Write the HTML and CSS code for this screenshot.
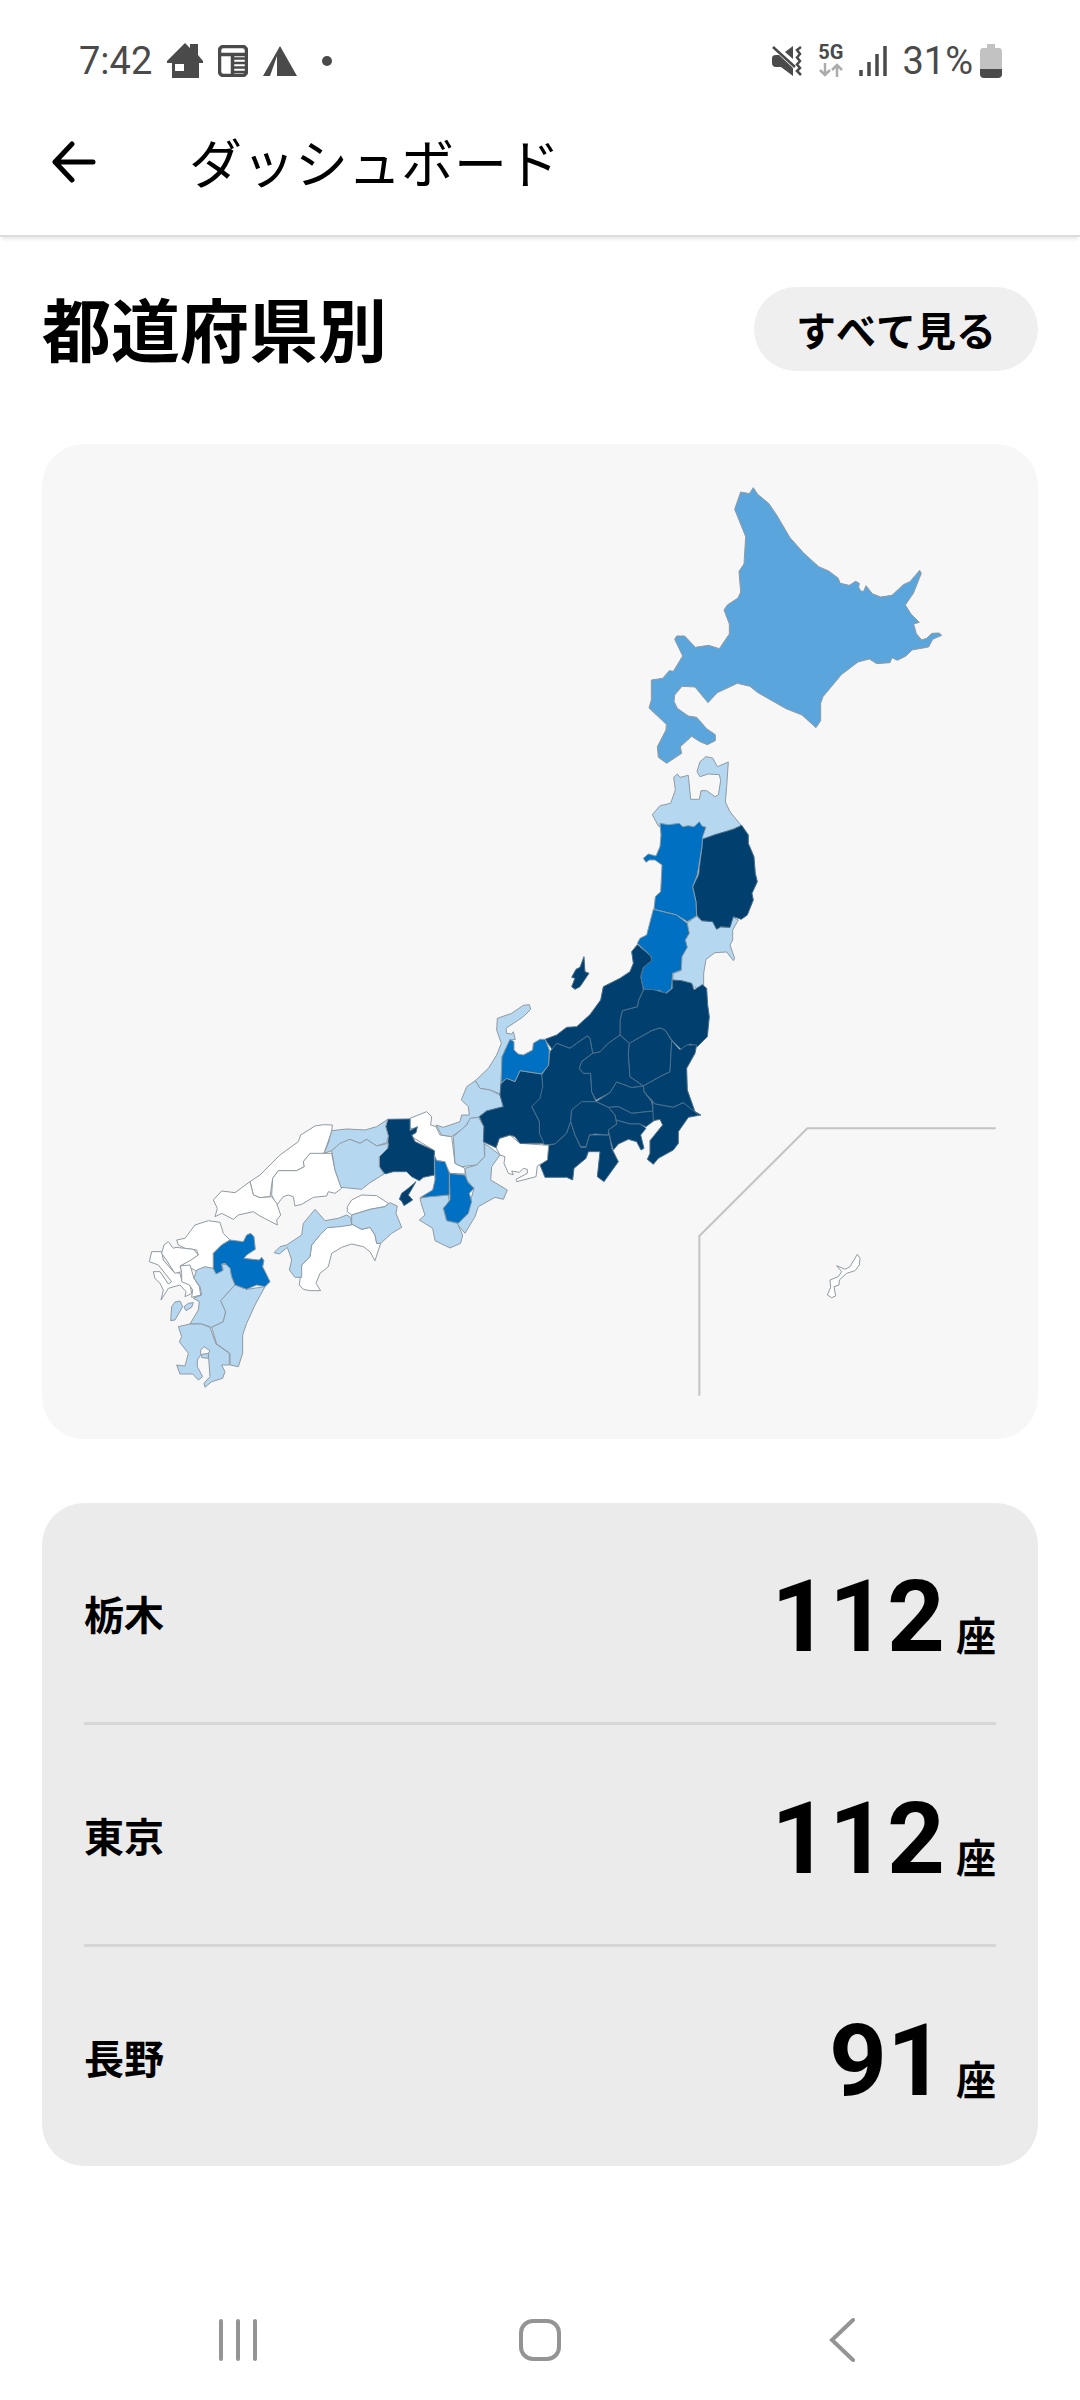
FILE: index.html
```html
<!DOCTYPE html>
<html lang="ja">
<head>
<meta charset="utf-8">
<meta name="viewport" content="width=device-width, initial-scale=1">
<title>ダッシュボード</title>
<link rel="stylesheet" href="styles.css">
</head>
<body>
<div class="screen">
  <div class="status">
    <div class="status-side">
      <span class="clock">7:42</span>
      <svg class="status-icon" width="36" height="36" viewBox="0 0 36 36"><path fill="#4a4a4a" fill-rule="evenodd" d="M18 0L23 5V1H31V12L36 18V20H32V35H5V20H0V18ZM8 21V28H17V21Z"/></svg>
      <svg class="status-icon" width="30" height="32" viewBox="0 0 30 32"><rect x="1.5" y="1.5" width="27" height="29" rx="4" fill="none" stroke="#4a4a4a" stroke-width="3.500"/><path d="M3 9.500H27M14.500 10V30" stroke="#4a4a4a" stroke-width="3.500"/><path d="M16 13.500H28M16 18H28M16 22.500H28M16 27H28" stroke="#4a4a4a" stroke-width="2.500"/></svg>
      <svg class="status-icon" width="34" height="30" viewBox="0 0 34 30"><path fill="#4a4a4a" d="M17 0L34 30H14V10L7 30H0Z"/></svg>
      <span class="more-dot"></span>
    </div>
    <div class="status-side status-right">
      <svg width="30" height="32" viewBox="0 0 30 32"><path fill="#4a4a4a" d="M0 13Q0 10 4 10H7L21 23V31L9 22H4Q0 22 0 18ZM13 7L21 1V14Z"/><path fill="none" stroke="#4a4a4a" stroke-width="2.500" d="M1 2L23 22M29 2L25 5L28 9L25 12.500L28 16L25 19.500L28 23L25 26L29 30"/></svg>
      <span class="network"><b>5G</b>
        <svg width="24" height="14" viewBox="0 0 24 14"><path fill="none" stroke="#ababab" stroke-width="2.500" d="M6 0V12M1 7L6 12L11 7M18 14V2M13 7L18 2L23 7"/></svg>
      </span>
      <svg class="signal" width="28" height="30" viewBox="0 0 28 30"><path stroke="#4a4a4a" stroke-width="3.500" d="M2 24V30M10 16V30M18 8V30M26 0V30"/></svg>
      <span class="percent">31%</span>
      <svg class="battery" width="22" height="34" viewBox="0 0 22 34"><path fill="#c2c2c2" d="M7 0H15V4H19Q22 4 22 8V25H0V8Q0 4 3 4H7Z"/><path fill="#4a4a4a" d="M0 25H22V30Q22 34 18 34H4Q0 34 0 30Z"/></svg>
    </div>
  </div>

  <header class="appbar">
    <button class="back" type="button" aria-label="戻る"><svg width="44" height="42" viewBox="0 0 44 42"><path fill="none" stroke="#000" stroke-width="5" stroke-linecap="round" stroke-linejoin="round" d="M20 3L3 21L20 39M3 21H41"/></svg></button>
    <h1 class="appbar-title">ダッシュボード</h1>
  </header>

  <main class="content">
    <div class="section-head">
      <h2 class="section-title">都道府県別</h2>
      <button class="pill" type="button">すべて見る</button>
    </div>

    <div class="map-card">
      <svg class="map" viewBox="42 444 996 995" role="img" aria-label="日本地図">
        <g class="region" transform="translate(620 470) scale(.33333)">
          <path class="l2" d="M400 53L413 73L446 100L470 135L510 203L550 248L596 290L626 303L654 324L661 340L688 346L707 334L718 340L716 352L722 363L731 364L738 347L757 371L782 381L816 376L850 344L870 335L899 301L904 310L880 370L856 405L873 432L898 457L881 462L889 491L905 510L920 505L936 490L958 489L965 496L938 508L926 531L876 540L858 558L832 571L816 563L810 578L770 581L748 567L714 576L664 614L609 680L602 700L602 752L588 773L546 735L498 716L412 667L390 649L352 640L292 668L264 698L225 651L186 649L164 675L162 694L172 715L205 738L230 742L260 776L286 794L286 812L262 824L240 815L215 799L181 830L185 850L140 880L115 862L112 830L138 780L139 763L87 714L94 690V630L128 625L148 602L160 604L188 558L164 508L170 498H194L226 532L266 526L298 536L328 492V462L312 420L322 405L354 384L362 366L357 304L372 282L377 200L344 118L362 66L388 71Z"/>
        </g>
        <g class="region" transform="translate(600 740) scale(.33333)">
          <path class="l1" d="M318 50L338 54L352 80L385 66L380 140L376 186L390 215L425 258L308 300L285 270L182 262L175 258L157 224L180 197L212 190L226 150L221 112L232 102L240 112L265 106L272 178H298L303 152H320L345 170L355 165L362 122L358 104L325 102L300 110L291 95L300 65Z"/>
          <path class="l1" d="M290 528L305 542L338 545L350 566L362 562L388 562L396 530L415 540L398 570L398 600L390 615L404 655L400 662L380 636L345 638L318 658L311 700V738L290 745L275 735L218 720L220 700L243 692L245 650L260 620L256 600L267 580L258 552Z"/>
          <path class="l4" d="M425 256L445 285L445 310L462 350L466 400L472 425L456 460L460 480L442 525L424 538L400 530L390 562L362 560L350 568L338 545L305 542L290 525L288 485L278 440L296 405L306 320V298L345 284L400 268Z"/>
          <path class="l3" d="M180 250L205 254L238 250L248 260L265 257L282 260L298 245L306 258L318 262L308 290L306 320L292 405L278 440L288 485L290 528L262 545L230 525L162 508L166 470L182 455L186 375L165 360L148 360L138 367L130 355L145 342L168 348L180 320L183 285Z"/>
          <path class="l3" d="M160 508L230 525L262 550L268 580L256 600L262 622L246 650L244 690L218 700L215 745L195 762L180 752L130 748L122 710L130 680L155 662L152 648L112 610L120 595L140 585Z"/>
        </g>
        <g class="region" transform="translate(540 920) scale(.33333)">
          <path class="l4" d="M398 180L425 182L455 190L462 210L487 194L500 205L503 255L508 290L502 350L472 380L450 372L425 390L395 360L375 330L360 324L335 332L268 370L240 345V302L247 272L292 260L296 240L312 208L340 209L380 220L398 205Z"/>
          <path class="l4" d="M292 74L332 108L335 122L310 142L302 170L310 210L296 240L292 260L247 272L240 302V345L205 370L180 396L158 400L150 355L142 348L110 370L90 385L50 370L38 390L15 358L50 345L80 322L110 320L150 284L182 240L190 200L240 175L270 155L280 130L275 95Z"/>
          <path class="l4" d="M132 110L135 155L147 160L120 200L105 208L95 200L105 175L95 172L108 148L120 142Z"/>
          <path class="l4" d="M50 370L90 385L110 370L142 348L150 355L158 400L125 425L118 445L130 460H152L155 515L168 545L130 545L95 570L92 605L80 640L45 672L12 675L-2 640V605L-25 560L8 500L5 465L25 435L30 395Z"/>
          <path class="l4" d="M240 345L268 370L265 400L270 470L310 498L275 503L230 486L210 518L168 540L155 515L152 460H130L118 445L125 425L158 400L180 396L205 370Z"/>
          <path class="l4" d="M268 370L335 332L360 324L375 330L395 362L390 455L360 470L310 498L270 470L265 400Z"/>
          <path class="l4" d="M395 362L420 390L440 375L470 375L465 400L440 445L442 510L465 575L482 585L455 570L430 548L400 562L345 552L312 515L310 498L360 470L390 455Z"/>
          <path class="l4" d="M168 545L210 518L230 486L275 503L310 498L312 515L335 545L340 573L275 580L235 560L205 562Z"/>
          <path class="l4" d="M205 562L235 560L275 580L340 573L342 602L318 620L300 612H270L228 600L225 585Z"/>
          <path class="l4" d="M312 515L345 552L400 562L430 548L470 580L482 585L445 592L415 635V670L400 690L355 715L340 733L322 718L330 700V662L368 615L360 598L340 602L338 545Z"/>
          <path class="l4" d="M228 600L270 612H300L318 625L302 645L312 685L303 690L290 665L265 658L235 672L220 690L208 645L205 630L230 612Z"/>
          <path class="l4" d="M92 605L105 645L122 682H138L148 645H208L215 685L235 725L192 785L172 770L180 695L145 695L138 715L102 745L98 780L80 772H15L0 735L20 720L24 676L45 672L80 640Z"/>
          <path class="l4" d="M168 545L205 562L225 585L230 612L205 630V645L165 642L148 645L138 680H122L105 645L92 605L95 570L125 545Z"/>
        </g>
        <g class="region" transform="translate(400 1000) scale(.33333)">
          <path class="l0" d="M30 355L80 335L95 350L92 375L108 380L120 405L155 410L165 490L195 505V522L150 520L130 485L105 480L100 450L35 410L50 385L30 385Z"/>
          <path class="l0" d="M288 443L298 415L330 405L360 430L446 436L442 480L412 498L408 530L350 545L348 538L382 520L382 508L370 505L358 517L335 513L340 524L325 520L312 490L315 470L300 465Z"/>
          <path class="l1" d="M388 14L392 28L370 50L318 85L320 100L335 102L340 95L346 118L330 120L306 170L302 282L270 270L240 265L226 242L265 205L290 165L304 130L290 90L292 55L335 40L370 16Z"/>
          <path class="l1" d="M226 242L240 265L270 270L300 285L310 320L260 333L235 352L215 355L190 385L155 410L125 405L108 375L130 382L180 365L185 345L208 345L205 320L184 300L200 260Z"/>
          <path class="l1" d="M235 352L252 380V430L254 470L230 495L185 500L165 490L160 410L200 375L210 355Z"/>
          <path class="l1" d="M254 430L300 465L275 500L272 540L322 570L310 598L285 592L235 620L225 650L210 675L195 700L170 670L205 640L215 590L222 565L200 540L195 505L230 495L254 470Z"/>
          <path class="l4" d="M303 250L320 235L345 245L360 212L425 222L428 260L420 295L395 320L418 365V400L432 430L360 430L345 410L330 405L298 415L288 443L250 425L252 380L238 350L260 333L310 320L300 285Z"/>
          <path class="l3" d="M330 118L342 125V150L355 162L370 165L398 150L400 130L420 118L436 118L448 150L446 195L425 222L360 212L345 245L320 235L303 250L306 170Z"/>
          <path class="l1" d="M60 595L85 590L145 585L148 605L130 625L140 662L172 670L188 705L182 730L150 744L105 722L98 685L58 660L75 645L65 615Z"/>
          <path class="l3" d="M148 520L195 525L205 548L222 565L208 580L215 605L205 640L175 670L140 662L130 625L150 600Z"/>
        </g>
        <g class="region" transform="translate(260 1100) scale(.33333)">
          <path class="l4" d="M383 58L450 57V92L472 80L468 98L455 105L465 125L523 152V225L490 232L478 242L455 230L440 215L400 215L375 222L358 200V170L383 145L385 108L377 80Z"/>
          <path class="l3" d="M523 165L530 182L555 185L568 220V285L480 293L518 270L525 240Z"/>
          <path class="l4" d="M468 245L445 285L458 300L432 317L425 303L418 298L425 280L445 265Z"/>
          <path class="l0" d="M217 75L190 74L165 78L122 105L115 125L60 165L0 225L-30 245L-20 285L0 293L30 290L38 235L55 212L110 212L133 200L130 185L150 162L192 160L215 95Z"/>
          <path class="l0" d="M215 160H150L130 185L133 200L110 212H55L38 235L35 285L50 315L70 290L85 285L100 290L105 318L125 313L160 292L200 288L205 275L225 280L245 265L225 210Z"/>
          <path class="l0" d="M-30 245L-75 278L-115 273L-140 300L-128 325L-135 350L-115 340L-80 358L-65 345L-20 335L0 348L52 375L50 360L62 345L50 310L35 290L0 293L-20 285Z"/>
          <path class="l1" d="M215 92L260 87L315 90L350 80L383 58L377 80L385 108L380 128L350 138L320 118L300 130L270 118L215 152L192 160L205 130Z"/>
          <path class="l1" d="M215 152L240 130L270 118L300 130L320 118L350 138L385 130L383 145L358 170V200L372 222L330 248L305 268L243 262L225 210Z"/>
          <path class="l0" d="M202 383L240 378L275 372L305 388L330 382L345 405L350 430L362 430L345 482L330 455L310 440L275 432L245 442L215 460L205 500L180 520L168 550L182 572L150 572L130 568L118 555L125 495L150 470L155 435L180 405Z"/>
          <path class="l1" d="M165 328L195 362L235 355L260 345L272 352L275 375L240 380L202 383L180 405L155 435L150 470L125 495V532H105L88 510L95 480L82 442L58 462L42 458L60 440L80 435L125 405L130 370Z"/>
          <path class="l0" d="M262 320L275 300L305 285L350 287L385 310L375 320L330 328L275 345L262 335Z"/>
          <path class="l1" d="M275 345L330 328L375 320L390 308L412 318L408 340L425 382L395 400L362 430L350 430L345 405L330 382L305 388L275 372Z"/>
        </g>
        <g class="region" transform="translate(130 1190) scale(.33333)">
          <path class="l0" d="M270 97L280 130L300 150L275 165L250 190V235L200 245L185 235L150 228L205 195L200 180L165 175L145 165L140 150L165 145L195 105L235 92Z"/>
          <path class="l0" d="M95 185L65 185L58 215L85 225L105 250L125 275L115 282L90 245L70 245L75 265L90 280L100 300L93 330L115 295L150 285L168 305L165 320L185 310L180 285L155 270L150 250L130 245L100 210Z"/>
          <path class="l0" d="M150 228L180 225L192 265L208 290L212 315L185 322L188 300L178 285L155 275L155 248Z"/>
          <path class="l0" d="M138 172L190 178L205 195L180 212L150 228L155 245L135 250L110 212L95 190L102 165L115 155L130 175Z"/>
          <path class="l1" d="M250 235L258 250L280 240L275 222L300 225L305 260L315 285L272 332L287 365L280 395L245 412L215 402H180L205 360L208 335L190 325L215 315L210 290L192 265L200 240L225 230Z"/>
          <path class="l1" d="M150 333L158 350L135 390L122 392L125 350L135 336ZM190 338L185 352L168 362L162 350L175 340Z"/>
          <path class="l1" d="M315 285L350 298L405 290L375 345L350 400L338 435V490L325 530L300 525V490L260 462L245 412L280 395L287 365L272 332Z"/>
          <path class="l1" d="M180 402H215L240 412L258 462L298 490V525L275 525L285 545L278 565L245 575L225 592L222 580L240 560L235 490L240 482L222 470L212 480V495L202 510V530L218 560L205 570L188 552L150 552L140 525L165 528L175 490L148 455L155 440L145 410Z"/>
          <path class="l1" d="M215 493L235 490V505L215 503Z"/>
          <path class="l3" d="M300 150L340 155L350 135L362 130L372 140L376 178L350 195L342 205L388 210L395 202L402 212L398 230L408 250L420 275L405 290L380 285L350 298L315 285L305 260L300 235L285 220L275 222L278 242L258 252L250 235V190L275 165Z"/>
        </g>
        <g class="region" transform="translate(680 1100) scale(.33333)">
          <path class="l0" d="M532 463L540 475L538 495L525 512L500 520L478 540L477 555L462 560L467 588L455 593L442 585L452 562L450 540L475 530L485 515L470 497L495 508L510 500Z"/>
          <path class="inset" d="M947 85H382L58 408V887"/>
        </g>
      </svg>
    </div>

    <ul class="ranking">
      <li class="row"><span class="name">栃木</span><span class="count">112</span><span class="unit">座</span></li>
      <li class="row"><span class="name">東京</span><span class="count">112</span><span class="unit">座</span></li>
      <li class="row"><span class="name">長野</span><span class="count">91</span><span class="unit">座</span></li>
    </ul>
  </main>

  <nav class="navbar">
    <button type="button" aria-label="履歴"><svg width="42" height="44" viewBox="0 0 42 44"><path stroke="#949494" stroke-width="4" stroke-linecap="round" d="M4 3V41M21 3V41M38 3V41"/></svg></button>
    <button type="button" aria-label="ホーム"><svg width="44" height="44" viewBox="0 0 44 44"><rect x="3" y="3" width="38" height="38" rx="12" fill="none" stroke="#949494" stroke-width="4"/></svg></button>
    <button type="button" aria-label="戻る"><svg width="44" height="44" viewBox="0 0 44 44"><path fill="none" stroke="#949494" stroke-width="4" stroke-linecap="round" d="M33 2L12 22L33 42"/></svg></button>
  </nav>
</div>
</body>
</html>
```
FILE: styles.css
```css
* {
  box-sizing: border-box;
}

body {
  margin: 0;
  background: #fff;
  color: #000;
  font-family: Roboto, "Noto Sans CJK JP", sans-serif;
  font-kerning: none;
}

button {
  margin: 0;
  padding: 0;
  border: 0;
  background: none;
  color: inherit;
  font: inherit;
  font-kerning: none;
}

svg {
  display: block;
  flex: none;
}

.screen {
  display: flex;
  flex-direction: column;
  min-height: 100vh;
}

/* Status bar */
.status {
  display: flex;
  justify-content: space-between;
  align-items: center;
  height: 88px;
  padding: 34px 78px 0 79px;
  color: #4a4a4a;
  font-size: 38px;
  line-height: 54px;
}

.status-side {
  display: flex;
  align-items: center;
  height: 54px;
}

.status-icon {
  margin-left: 15px;
}

.more-dot {
  width: 10px;
  height: 10px;
  margin-left: 25px;
  border-radius: 50%;
  background: #4a4a4a;
}

.network {
  display: flex;
  flex-direction: column;
  align-items: center;
  gap: 4px;
  margin: 0 16px;
  font-size: 20px;
  line-height: 14px;
}

.percent {
  margin: 0 7px 0 15px;
}

/* App bar */
.appbar {
  display: flex;
  align-items: center;
  gap: 93px;
  height: 149px;
  padding: 0 52px;
  border-bottom: 2px solid #ddd;
  box-shadow: 0 4px 4px -2px rgba(0, 0, 0, 0.1);
}

.appbar-title {
  margin: 0;
  padding-top: 8px;
  font-size: 53px;
  font-weight: 400;
  line-height: 72px;
}

/* Content */
.content {
  padding: 50px 42px 42px;
}

.section-head {
  display: flex;
  justify-content: space-between;
  align-items: center;
  height: 84px;
  margin-bottom: 73px;
}

.section-title {
  margin: 0;
  padding-top: 10px;
  font-size: 69px;
  font-weight: 700;
  line-height: 84px;
}

.pill {
  height: 84px;
  padding: 0 42px;
  border-radius: 42px;
  background: #efefef;
  font-size: 40px;
  font-weight: 700;
}

.map-card {
  overflow: hidden;
  border-radius: 42px;
  background: #f7f7f8;
}

.map {
  width: 100%;
  height: auto;
}

.region path {
  stroke: #8f9aa3;
  stroke-width: 3;
  stroke-linejoin: round;
}

.region .l0 { fill: #fff; }
.region .l1 { fill: #b5d7f0; }
.region .l2 { fill: #5aa6dc; }
.region .l3 { fill: #0070c2; }
.region .l4 { fill: #003f6e; stroke: #4a6f8c; }

.region .inset {
  fill: none;
  stroke: #c4c4c4;
  stroke-width: 6;
}

.ranking {
  margin: 64px 0 0;
  padding: 0 42px;
  border-radius: 42px;
  background: #ebebeb;
  list-style: none;
}

.row {
  display: flex;
  align-items: baseline;
  gap: 11px;
  padding: 51px 0 42px;
}

.row + .row {
  border-top: 3px solid #d6d6d6;
}

.name,
.unit {
  font-size: 40px;
  font-weight: 700;
  line-height: 60px;
}

.name {
  align-self: center;
  margin-right: auto;
}

.count {
  font-size: 101px;
  font-weight: 700;
  line-height: 126px;
}

/* System navigation */
.navbar {
  display: grid;
  grid-template-columns: repeat(3, 1fr);
  align-items: center;
  height: 120px;
  margin-top: auto;
  padding: 0 87px;
}

.navbar button {
  display: flex;
  justify-content: center;
}
```
